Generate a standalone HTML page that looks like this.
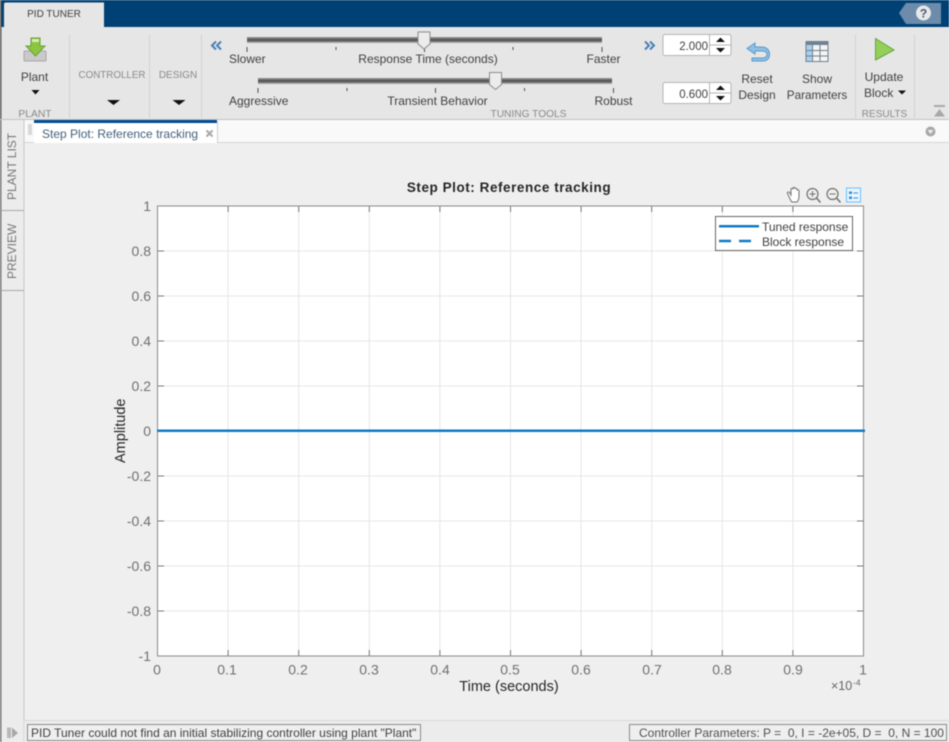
<!DOCTYPE html>
<html><head><meta charset="utf-8"><style>
html,body{margin:0;padding:0;width:949px;height:742px;overflow:hidden;background:#efefef}
svg{display:block;filter:blur(.45px)}
text{font-family:"Liberation Sans",sans-serif;font-size:12px;fill:#404040;white-space:pre}
.c{text-anchor:middle}.e{text-anchor:end}
.g{fill:#8a8a8a}.a{font-size:14px;fill:#707070}
</style></head><body>
<svg width="949" height="742" viewBox="0 0 949 742" xmlns="http://www.w3.org/2000/svg">
<rect width="949" height="742" fill="#efefef"/>
<!-- title bar -->
<rect width="949" height="27" fill="#004175"/>
<rect x="0" y="0" width="1.500" height="120" fill="#5a5a5a"/>
<path d="M4 27V4Q4 2.500 6 2.500H104V27Z" fill="#e6e6e6"/>
<text x="54" y="17" class="c" style="font-size:10px">PID TUNER</text>
<path d="M899 13L906 3H941V24H906Z" fill="#6d8cab"/>
<circle cx="923.500" cy="13" r="7.500" fill="#e8e8e8"/>
<text x="923.500" y="17.500" class="c" style="font-size:12px;font-weight:bold;fill:#3d5a78">?</text>
<!-- toolstrip -->
<rect x="1.500" y="27" width="947.500" height="92" fill="#e6e6e6"/>
<rect x="0" y="119" width="949" height="1.500" fill="#c2c2c2"/>
<path d="M69.500 35V118M149.500 35V118M201.500 35V118M855.500 35V118M914.500 35V118" stroke="#d2d2d2" stroke-width="1"/>
<!-- plant -->
<rect x="24" y="51" width="22" height="10" rx="1" fill="#c9c9c9" stroke="#a8a8a8"/>
<path d="M31 38H40V46H45L35.500 56L26 46H31Z" fill="#8cc63f" stroke="#6b9e3a" stroke-width="1"/>
<path d="M32 39H39V42H32Z" fill="#d8ecb0"/>
<text x="34.500" y="81" class="c">Plant</text>
<path d="M31.500 90H39.500L35.500 94.500Z" fill="#111"/>
<text x="35" y="117" class="c g" style="font-size:10.300px">PLANT</text>
<text x="112" y="78" class="c g" style="font-size:9.800px">CONTROLLER</text>
<path d="M107 100H120L113.500 105Z" fill="#111"/>
<text x="178" y="78" class="c g" style="font-size:10px">DESIGN</text>
<path d="M172.500 100H185.500L179 105Z" fill="#111"/>
<!-- chevrons -->
<path d="M216 41.500L212 45.500L216 49.500M221 41.500L217 45.500L221 49.500" fill="none" stroke="#4a7fb5" stroke-width="2"/>
<path d="M645 41.500L649 45.500L645 49.500M650 41.500L654 45.500L650 49.500" fill="none" stroke="#4a7fb5" stroke-width="2"/>
<!-- sliders -->
<rect x="247" y="37" width="355" height="6" fill="#5c5c5c"/><rect x="247" y="37" width="355" height="1.500" fill="#8c8c8c"/><rect x="247" y="41.500" width="355" height="1.500" fill="#a0a0a0"/>
<rect x="258" y="78" width="354" height="6" fill="#5c5c5c"/><rect x="258" y="78" width="354" height="1.500" fill="#8c8c8c"/><rect x="258" y="82.500" width="354" height="1.500" fill="#a0a0a0"/>
<path d="M247 47V52M336 47V50M424.500 47V52M513 47V50M602 47V52M258 88V93M347 88V91M435.500 88V93M524.500 88V91M613.500 88V93" stroke="#505050" stroke-width="1"/>
<path d="M418 32H430V44L424 49L418 44Z" fill="#ececec" stroke="#8c8c8c" stroke-width="1"/>
<path d="M489.500 72.500H501.500V84.500L495.500 89.500L489.500 84.500Z" fill="#ececec" stroke="#8c8c8c" stroke-width="1"/>
<text x="229" y="63">Slower</text>
<text x="428" y="63" class="c">Response Time (seconds)</text>
<text x="603.500" y="63" class="c">Faster</text>
<text x="229" y="105">Aggressive</text>
<text x="437.500" y="105" class="c">Transient Behavior</text>
<text x="613.500" y="105" class="c">Robust</text>
<text x="528.500" y="117" class="c g" style="font-size:10.200px">TUNING TOOLS</text>
<!-- spinners -->
<rect x="663" y="34.500" width="68" height="21" rx="2" fill="#fff" stroke="#b4b4b4"/>
<path d="M709.500 34.500V55.500M709.500 45H731" stroke="#b4b4b4"/>
<text x="708" y="50" class="e" style="font-size:11.500px">2.000</text>
<path d="M716 42H725L720.500 37.500ZM716 48H725L720.500 52.500Z" fill="#111"/>
<rect x="663" y="82.500" width="68" height="21" rx="2" fill="#fff" stroke="#b4b4b4"/>
<path d="M709.500 82.500V103.500M709.500 93H731" stroke="#b4b4b4"/>
<text x="708" y="98" class="e" style="font-size:11.500px">0.600</text>
<path d="M716 90H725L720.500 85.500ZM716 96H725L720.500 100.500Z" fill="#111"/>
<!-- reset -->
<path d="M755 43L747 48.500L755 54V51H762C766 51 767 53 767 54.500C767 57 765 58 762 58H752V61H763C767.500 61 769.500 58 769.500 54.500C769.500 50.500 767 47 762 47H755Z" fill="#8fc0e6" stroke="#5b98c8" stroke-width="1"/>
<text x="757" y="83" class="c">Reset</text>
<text x="757" y="99" class="c">Design</text>
<!-- show params -->
<rect x="806" y="41.500" width="22" height="20" fill="#f4f4f4" stroke="#6f7f8c"/>
<rect x="806" y="41.500" width="22" height="3.500" fill="#6f8192"/>
<rect x="806.500" y="45" width="5.500" height="16" fill="#a9d0ee"/>
<path d="M812.500 45V62M820 45V62M806 50.500H828M806 56H828" stroke="#6f7f8c" stroke-width="1"/>
<text x="817" y="83" class="c">Show</text>
<text x="817" y="99" class="c" style="font-size:11.700px">Parameters</text>
<!-- update -->
<path d="M875.500 38.500L894 50L875.500 60Z" fill="#94cf5c" stroke="#5fa63a" stroke-width="1"/>
<text x="884" y="81" class="c">Update</text>
<text x="864" y="97">Block</text>
<path d="M898 90.500H906L902 94.500Z" fill="#111"/>
<text x="884.500" y="117" class="c g" style="font-size:10px">RESULTS</text>
<rect x="934" y="105" width="11" height="2" fill="#a8a8a8"/>
<path d="M934 116.500H945L939.500 109Z" fill="#a8a8a8"/>
<!-- tab strip -->
<rect x="24" y="120" width="925" height="22" fill="#f9f9f9"/>
<rect x="24" y="142" width="925" height="1" fill="#d6d6d6"/>
<rect x="28" y="124" width="4" height="11" fill="#d8d8d8"/>
<rect x="34" y="120" width="183" height="23" fill="#fff"/>
<rect x="34" y="120" width="183" height="3" fill="#004b93"/>
<path d="M217.500 122V143" stroke="#d0d0d0"/>
<text x="42" y="138" style="font-size:12px;fill:#44607c">Step Plot: Reference tracking</text>
<path d="M206.500 130.500L212.500 136.500M212.500 130.500L206.500 136.500" stroke="#a8a8a8" stroke-width="2"/>
<circle cx="930.500" cy="131.500" r="5" fill="#a8a8a8"/><path d="M927.500 130H933.500L930.500 134Z" fill="#eee"/>
<!-- sidebar -->
<rect x="0" y="120" width="24" height="622" fill="#ececec"/>
<rect x="0" y="120" width="1.500" height="622" fill="#777"/>
<rect x="23.500" y="120" width="1" height="622" fill="#c8c8c8"/>
<path d="M1 210.500H24M1 290.500H24" stroke="#a8a8a8"/>
<text transform="translate(16,200) rotate(-90)" style="font-size:12px;fill:#777">PLANT LIST</text>
<text transform="translate(16,279) rotate(-90)" style="font-size:12px;fill:#777">PREVIEW</text>
<!-- plot -->
<text x="509" y="192" class="c" style="font-size:13.500px;font-weight:bold;fill:#262626;letter-spacing:.55px">Step Plot: Reference tracking</text>
<rect x="157.500" y="206" width="706" height="450" fill="#fff"/>
<path d="M228.100 206V656M298.700 206V656M369.300 206V656M439.900 206V656M510.500 206V656M581.100 206V656M651.700 206V656M722.300 206V656M792.900 206V656M157.500 251H863.500M157.500 296H863.500M157.500 341H863.500M157.500 386H863.500M157.500 431H863.500M157.500 476H863.500M157.500 521H863.500M157.500 566H863.500M157.500 611H863.500" stroke="#e6e6e6" stroke-width="1"/>
<path d="M228.100 206V212M298.700 206V212M369.300 206V212M439.900 206V212M510.500 206V212M581.100 206V212M651.700 206V212M722.300 206V212M792.900 206V212M228.100 656V650M298.700 656V650M369.300 656V650M439.900 656V650M510.500 656V650M581.100 656V650M651.700 656V650M722.300 656V650M792.900 656V650M157.500 251H164M157.500 296H164M157.500 341H164M157.500 386H164M157.500 431H164M157.500 476H164M157.500 521H164M157.500 566H164M157.500 611H164M863.500 251H857M863.500 296H857M863.500 341H857M863.500 386H857M863.500 431H857M863.500 476H857M863.500 521H857M863.500 566H857M863.500 611H857" stroke="#777" stroke-width="1"/>
<rect x="157.500" y="206" width="706" height="450" fill="none" stroke="#8a8a8a" stroke-width="1"/>
<rect x="157" y="429.500" width="708" height="2.500" fill="#0f7bc4"/>
<g class="a">
<text x="151" y="211" class="e a">1</text>
<text x="151" y="256" class="e a">0.8</text>
<text x="151" y="301" class="e a">0.6</text>
<text x="151" y="346" class="e a">0.4</text>
<text x="151" y="391" class="e a">0.2</text>
<text x="151" y="436" class="e a">0</text>
<text x="151" y="481" class="e a">-0.2</text>
<text x="151" y="526" class="e a">-0.4</text>
<text x="151" y="571" class="e a">-0.6</text>
<text x="151" y="616" class="e a">-0.8</text>
<text x="151" y="661" class="e a">-1</text>
<text x="157" y="674.500" class="c a">0</text>
<text x="227" y="674.500" class="c a">0.1</text>
<text x="298" y="674.500" class="c a">0.2</text>
<text x="369" y="674.500" class="c a">0.3</text>
<text x="440" y="674.500" class="c a">0.4</text>
<text x="510" y="674.500" class="c a">0.5</text>
<text x="581" y="674.500" class="c a">0.6</text>
<text x="652" y="674.500" class="c a">0.7</text>
<text x="722" y="674.500" class="c a">0.8</text>
<text x="793" y="674.500" class="c a">0.9</text>
<text x="863" y="674.500" class="c a">1</text>
</g>
<text x="509" y="691" class="c" style="font-size:14.500px;fill:#262626">Time (seconds)</text>
<text transform="translate(125,463) rotate(-90)" style="font-size:14.500px;fill:#262626">Amplitude</text>
<text x="831" y="690" style="font-size:12.500px;fill:#666">×10</text>
<text x="853" y="685.500" style="font-size:8.500px;fill:#666">-4</text>
<!-- axes toolbar -->
<path d="M791 201L787.500 193.500C787 192 788.500 191.500 789.500 192.500L791 195V189.500C791 188 793 188 793 189.500V188.500C793 187 795 187 795 188.500V189C795 188 797 188 797 189.500V190.500C797 189.500 799 189.500 799 191V196C799 199 798 201 797 202H792Z" fill="#fff" stroke="#707070" stroke-width="1"/>
<circle cx="812.500" cy="194" r="5.500" fill="none" stroke="#707070" stroke-width="1.200"/>
<path d="M816.500 198L820.500 202.500" stroke="#707070" stroke-width="1.500"/><path d="M809.500 194H815.500M812.500 191V197" stroke="#707070"/>
<circle cx="832.500" cy="194" r="5.500" fill="none" stroke="#707070" stroke-width="1.200"/>
<path d="M836.500 198L840.500 202.500" stroke="#707070" stroke-width="1.500"/><path d="M829.500 194H835.500" stroke="#707070"/>
<rect x="846.500" y="188" width="14" height="14" fill="#eaf5ff" stroke="#66c0ff"/>
<path d="M849 191.500H852V194H849ZM849 196.500H852V199H849Z" fill="#2d8fd5"/><path d="M853.500 193H858M853.500 198H858" stroke="#2d8fd5"/>
<!-- legend -->
<rect x="715.500" y="216.500" width="137" height="34" fill="#fff" stroke="#666" stroke-width="1"/>
<rect x="719" y="225" width="40" height="2.500" fill="#0f7bc4"/>
<path d="M719 241H731M739 241H751" stroke="#0f7bc4" stroke-width="2.500"/>
<text x="762" y="231" style="font-size:12px;fill:#404040">Tuned response</text>
<text x="762" y="246" style="font-size:12px;fill:#404040">Block response</text>
<!-- status bar -->
<rect x="24" y="720" width="925" height="1.500" fill="#d8d8d8"/>
<rect x="24" y="721" width="925" height="21" fill="#ececec"/>
<path d="M8 727.500V738M10 727.500V738" stroke="#a8a8a8" stroke-width="1.500"/><path d="M12 727.500L18 733L12 738Z" fill="#a8a8a8"/>
<rect x="27.500" y="724.500" width="393" height="16" fill="#efefef" stroke="#8c8c8c"/>
<text x="31" y="737" style="font-size:12px">PID Tuner could not find an initial stabilizing controller using plant "Plant"</text>
<rect x="629.500" y="724.500" width="317" height="16" fill="#efefef" stroke="#8c8c8c"/>
<text x="639" y="737" xml:space="preserve" style="font-size:12px;fill:#505050">Controller Parameters: P =  0, I = -2e+05, D =  0, N = 100</text>
</svg>
</body></html>
